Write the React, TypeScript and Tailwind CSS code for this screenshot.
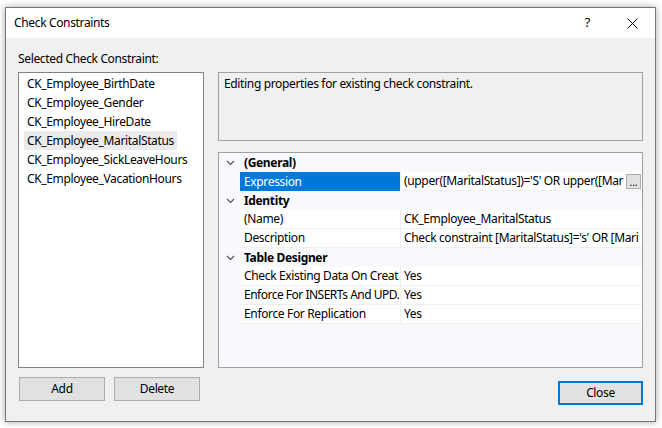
import React from "react";

const FONT = {
  fontFamily: '"Segoe UI", "Noto Sans", "Open Sans", sans-serif',
  letterSpacing: "-0.35px",
};

const CONSTRAINTS = [
  "CK_Employee_BirthDate",
  "CK_Employee_Gender",
  "CK_Employee_HireDate",
  "CK_Employee_MaritalStatus",
  "CK_Employee_SickLeaveHours",
  "CK_Employee_VacationHours",
];

type Row =
  | { kind: "cat"; label: string }
  | { kind: "prop"; name: string; value: string; selected?: boolean; button?: boolean; tight?: boolean };

// names / values as they show in the narrow grid columns
const ROWS: Row[] = [
  { kind: "cat", label: "(General)" },
  {
    kind: "prop",
    name: "Expression",
    value: "(upper([MaritalStatus])='S' OR upper([Mar",
    selected: true,
    button: true,
  },
  { kind: "cat", label: "Identity" },
  { kind: "prop", name: "(Name)", value: "CK_Employee_MaritalStatus" },
  { kind: "prop", name: "Description", value: "Check constraint [MaritalStatus]='s' OR [Mari" },
  { kind: "cat", label: "Table Designer" },
  { kind: "prop", name: "Check Existing Data On Creat", value: "Yes" },
  { kind: "prop", name: "Enforce For INSERTs And UPD.", value: "Yes", tight: true },
  { kind: "prop", name: "Enforce For Replication", value: "Yes" },
];

function Chevron() {
  return (
    <svg width="9" height="6" viewBox="0 0 9 6" className="text-[#555]">
      <path d="M1 1 L4.5 4.5 L8 1" fill="none" stroke="currentColor" strokeWidth="1.2" />
    </svg>
  );
}

function PropertyGrid() {
  return (
    <div className="h-[216px] border border-[#a0a0a0] bg-[#f7f9fc] text-[12px] text-black">
      {ROWS.map((r, i) =>
        r.kind === "cat" ? (
          <div key={i} className="flex h-[19px] items-center bg-[#f7f9fc]">
            <div className="flex w-[21px] shrink-0 justify-center pl-[2px]">
              <Chevron />
            </div>
            <span className="pl-[4px] font-bold">{r.label}</span>
          </div>
        ) : (
          <div key={i} className="flex h-[19px]">
            <div className="w-[21px] shrink-0 bg-[#f7f9fc]" />
            <div
              className={
                r.selected
                  ? "w-[160px] shrink-0 overflow-hidden whitespace-nowrap bg-[#0078d7] pl-[4px] leading-[19px] text-white"
                  : r.tight
                    ? "w-[160px] shrink-0 overflow-hidden whitespace-nowrap border-b border-[#f0f0f0] bg-white pl-[4px] leading-[18px] tracking-[-0.5px]"
                    : "w-[160px] shrink-0 overflow-hidden whitespace-nowrap border-b border-[#f0f0f0] bg-white pl-[4px] leading-[18px]"
              }
            >
              {r.name}
            </div>
            <div className="flex min-w-0 flex-1 items-start overflow-hidden whitespace-nowrap border-b border-l border-[#f0f0f0] bg-white pl-[3px] leading-[18px]">
              <span className="min-w-0 flex-1 overflow-hidden">{r.value}</span>
              {r.button && (
                <div className="mr-[1px] mt-[2px] flex h-[15px] w-[15px] shrink-0 items-end justify-center border border-[#adadad] bg-[#e1e1e1] text-[10px] leading-[12px] tracking-normal">
                  ...
                </div>
              )}
            </div>
          </div>
        )
      )}
    </div>
  );
}

export default function App() {
  return (
    <div className="h-[428px] w-[662px] bg-white pl-[5px] pt-[7px]" style={FONT}>
      <div className="flex h-[415px] w-[651px] flex-col border border-[#767676] bg-[#f0f0f0] shadow-[0_0_7px_rgba(0,0,0,0.35)]">
        {/* title bar */}
        <div className="flex h-[30px] shrink-0 items-center bg-white text-[12px] text-black">
          <span className="pl-[8px]">Check Constraints</span>
          <span className="ml-auto mr-[37px] text-[13px]">?</span>
          <svg width="11" height="11" viewBox="0 0 11 11" className="mr-[17px]">
            <path d="M0.5 0.5 L10.5 10.5 M10.5 0.5 L0.5 10.5" stroke="#000" strokeWidth="1" />
          </svg>
        </div>

        {/* body */}
        <div className="flex flex-1 flex-col px-[12px] pt-[13px] text-[12px] text-black">
          <div className="h-[16px] leading-[16px]">Selected Check Constraint:</div>
          <div className="mt-[5px] flex gap-[14px]">
            <div className="h-[296px] w-[186px] shrink-0 border border-[#828282] bg-white pt-[1px]">
              {CONSTRAINTS.map((c) => (
                <div key={c} className="h-[19px] pl-[5px]">
                  <span
                    className={
                      c === "CK_Employee_MaritalStatus"
                        ? "inline-block h-[19px] bg-[#ebebeb] pl-[3px] pr-[3px] leading-[19px]"
                        : "inline-block h-[19px] pl-[3px] leading-[19px]"
                    }
                  >
                    {c}
                  </span>
                </div>
              ))}
            </div>
            <div className="flex min-w-0 flex-1 flex-col gap-[11px]">
              <div className="h-[69px] border border-[#a0a0a0] bg-[#f0f0f0] pl-[5px] pt-[2px]">
                Editing properties for existing check constraint.
              </div>
              <PropertyGrid />
            </div>
          </div>

          <div className="mt-[9px] flex items-start">
            <button className="ml-[1px] h-[24px] w-[86px] border border-[#adadad] bg-[#e1e1e1] text-[12px]">
              Add
            </button>
            <button className="ml-[9px] h-[24px] w-[86px] border border-[#adadad] bg-[#e1e1e1] text-[12px]">
              Delete
            </button>
            <button className="ml-auto mt-[4px] h-[24px] w-[85px] border-2 border-[#0078d7] bg-[#e1e1e1] text-[12px]">
              Close
            </button>
          </div>
        </div>
      </div>
    </div>
  );
}
